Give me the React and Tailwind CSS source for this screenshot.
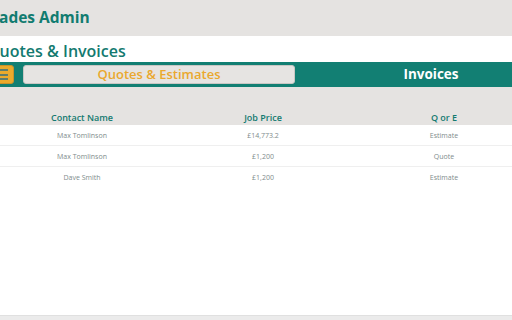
export default function App() {
  const rows = [
    ["Max Tomlinson", "£14,773.2", "Estimate"],
    ["Max Tomlinson", "£1,200", "Quote"],
    ["Dave Smith", "£1,200", "Estimate"],
  ];
  return (
    <div className="w-[512px] h-[320px] overflow-hidden bg-white flex flex-col" style={{ fontFamily: '"Open Sans", sans-serif' }}>
      <div className="-ml-[20px] w-[600px] flex flex-col flex-1">
        <div className="h-[36px] bg-[#e5e3e1] flex items-start pt-[10px] pl-[3px]">
          <span className="text-[15.5px] font-bold text-[#117c70] leading-none">Trades Admin</span>
        </div>
        <div className="h-[26px] bg-white flex items-end pl-[7px] pb-[3px]">
          <span className="text-[16px] font-semibold text-[#137a70] leading-none">Quotes &amp; Invoices</span>
        </div>
        <div className="h-[25px] bg-[#127f73] flex items-center pl-[6px]">
          <div className="w-[28px] h-[19px] rounded-[3px] bg-[#eaaa2c] border border-[#c9922a] flex flex-col justify-center items-end gap-[2.5px] pr-[5px]">
            <div className="w-[14px] h-[2px] bg-[#5e7d6c]"></div>
            <div className="w-[14px] h-[2px] bg-[#5e7d6c]"></div>
            <div className="w-[14px] h-[2px] bg-[#5e7d6c]"></div>
          </div>
          <div className="ml-[9px] w-[272px] h-[19px] rounded-[3px] bg-[#e6e4e2] border border-[#c9c7c4] flex items-center justify-center">
            <span className="text-[13px] font-semibold text-[#eaa82e] leading-none">Quotes &amp; Estimates</span>
          </div>
          <div className="w-[272px] h-[19px] flex items-center justify-center">
            <span className="text-[13.5px] font-bold text-white leading-none">Invoices</span>
          </div>
        </div>
        <div className="bg-[#e5e3e1] h-[38px] flex items-end">
          <div className="ml-[11.5px] grid grid-cols-[181px_181px_181px] pb-[3px]">
            <span className="text-center text-[9px] font-semibold text-[#137a70] leading-none">Contact Name</span>
            <span className="text-center text-[9px] font-semibold text-[#137a70] leading-none">Job Price</span>
            <span className="text-center text-[9px] font-semibold text-[#137a70] leading-none">Q or E</span>
          </div>
        </div>
        <div className="flex flex-col flex-1">
          {rows.map((r, i) => (
            <div key={i} className={i < rows.length - 1 ? "h-[21px] border-b border-[#efefef] flex items-center" : "h-[21px] flex items-center"}>
              <div className="ml-[11.5px] grid grid-cols-[181px_181px_181px]">
                {r.map((c, j) => (
                  <span key={j} className="text-center text-[7px] text-[#808c8c] leading-none">{c}</span>
                ))}
              </div>
            </div>
          ))}
        </div>
        <div className="h-[5px] bg-[#ebebeb] border-t border-[#e0e0e0]"></div>
      </div>
    </div>
  );
}
